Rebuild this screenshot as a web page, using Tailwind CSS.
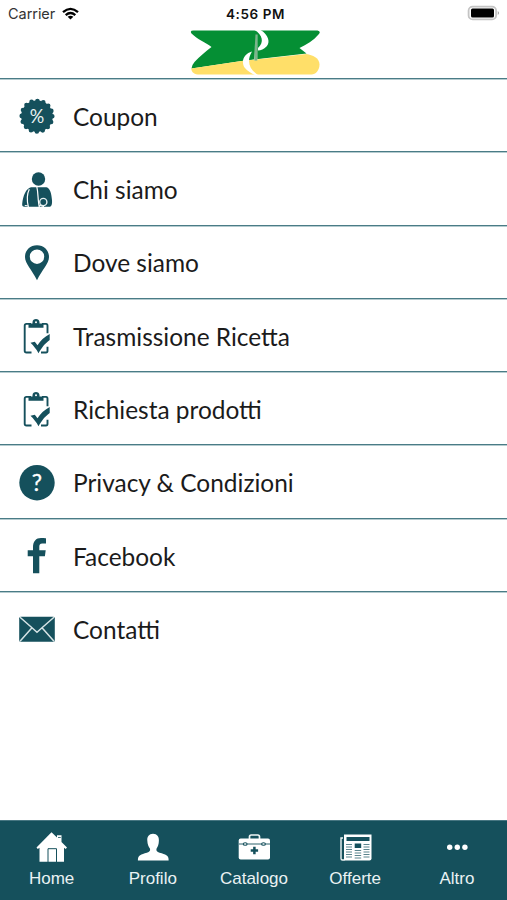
<!DOCTYPE html>
<html lang="it">
<head>
<meta charset="utf-8">
<title>Menu</title>
<script src="https://cdn.jsdelivr.net/npm/@tailwindcss/browser@4"></script>
</head>
<body class="bg-white">
<svg class="hidden">
  <symbol id="clipboard" viewBox="0 0 74 73">
    <path d="M31 24.2h-4.500q-1.800 0-1.800 1.800v25q0 1.800 1.800 1.800h5M42 24.200h4q1.500 0 1.500 1.800v7.500M47.500 47v4q0 1.800-1.500 1.800h-5" fill="none" stroke="#15505c" stroke-width="1.900"/>
    <path d="M28.500 28v-4.200h4V22.500c0-4.200 7-4.200 7 0v1.300h4V28z" fill="#15505c"/>
    <circle cx="36" cy="22.500" r="1" fill="#fff"/>
    <path d="M30.500 43l4.300-.9 2.700 3.400c3-4.500 6.500-8.300 12.200-11.300v6c-5.200 4-7.600 7-11.200 13.300-2-4-5-7.500-8-10.500z" fill="#15505c"/>
  </symbol>
</svg>
<div class="w-[507px] h-[900px] flex flex-col overflow-hidden bg-white font-['Lato','Noto_Sans',sans-serif] text-[#1b1b1b]">
  <header class="h-[79px] shrink-0 border-b border-[#4a7c86] shadow-[0_1px_0_#b5cbcf]">
    <div class="h-[28px] grid grid-cols-3 items-center pl-[8px] pr-[7px] font-['Inter','Liberation_Sans',sans-serif] text-[14px]">
      <div class="flex items-center gap-[7px] text-[#333]"><span class="text-[14.500px] tracking-[-0.050px]">Carrier</span>
        <svg class="w-[17px] h-[13px] relative -top-px" viewBox="0 0 17 13" fill="none" stroke="#000" stroke-width="2.300"><path d="M1 5.200Q8.500-1.500 16 5.200M3.700 8.100Q8.500 4 13.300 8.100"/><path d="M8.500 12.500L5.600 9.800Q8.500 7.600 11.400 9.800z" fill="#000" stroke="none"/></svg>
      </div>
      <div class="text-center text-[13.500px] font-semibold tracking-[0.600px] pl-[3px] text-[#111]">4:56 PM</div>
      <svg class="w-[34px] h-[16px] justify-self-end relative -top-px" viewBox="0 0 34 16"><rect x="2.600" y="1.600" width="27.500" height="12.800" rx="4" fill="#fff" stroke="#c4c4c4" stroke-width="1.800"/><rect x="5" y="3.600" width="23" height="9" rx="1.500" fill="#000"/><path d="M31.800 6q2 2 0 4z" fill="#888"/></svg>
    </div>
    <svg class="block mx-auto w-[132px] h-[48px]" viewBox="187.500 27.500 132 48">
      <path d="M193 30H317q4 1 1 4C313 40 306 44 299 47.500L306 53 241 60.500 191 68q0-3 3-6.500C199 56 205 51 211 46.500 205 42 197 39 191 33q-2-3 2-3z" fill="#058f34"/>
      <path d="M190.800 68L241 60.500 306 53.500c6 1 13 4 13 10.500 0 6-4 10-8 10H199c-5 0-8-2-8.200-6z" fill="#ffdf69"/>
      <path d="M255 34h2v26h-3.500z" fill="#9bcba7"/><path d="M255.500 33v27" stroke="#39824f" stroke-width=".6"/>
      <path d="M254 29.500H260C268 34 270 42 266 46Q262 50 257.500 50V47.500C264 42 262 34 254 29.500z" fill="#fff"/>
      <path d="M251.500 51C244 53 240 60 244 67q4 5 13 8.500h2C248 69 246 60 251.500 51z" fill="#fff"/>
    </svg>
  </header>

  <main class="flex-1 text-[24.450px]">
    <div class="h-[73.300px] flex items-center border-b border-[#4a7c86] shadow-[0_1px_0_#b5cbcf]">
      <svg class="w-[73px] h-[73px] shrink-0 overflow-visible" viewBox="0 -0.2 73 73"><circle cx="37" cy="37" r="15.800" fill="#15505c"/><circle cx="37" cy="37" r="15.280" fill="none" stroke="#15505c" stroke-width="4.600" stroke-linecap="round" stroke-dasharray="0 6"/><text x="37" y="43.800" text-anchor="middle" font-size="20" textLength="14.500" lengthAdjust="spacingAndGlyphs" fill="#e9f2f3">%</text></svg>
      <span class="pt-[4px]">Coupon</span>
    </div>
    <div class="h-[73.300px] flex items-center border-b border-[#4a7c86] shadow-[0_1px_0_#b5cbcf]">
      <svg class="w-[73px] h-[73px] shrink-0" viewBox="0 -0.7 73 73"><circle cx="38.500" cy="26.300" r="6.700" fill="#15505c"/><path d="M31 34.500h15.500c3.500 1 5 6 5.500 13 .3 4-.5 6.500-2.500 6.500H24.500c-2 0-2.500-1-2.300-3C23 43 26 35.500 31 34.500z" fill="#15505c"/><path d="M29.300 36.500C26.500 42 27 49 28.500 55M36.700 33.500C38.500 41 37.600 48 39.500 55" fill="none" stroke="#fff" stroke-width="1.200"/><circle cx="43.300" cy="49.300" r="3.600" fill="#15505c" stroke="#e5eff0" stroke-width="1.400"/><path d="M39 52.500l5 1.500M24.800 52.800l3 .3" stroke="#fff" stroke-width="1"/></svg>
      <span class="pt-[3px]">Chi siamo</span>
    </div>
    <div class="h-[73.300px] flex items-center border-b border-[#4a7c86] shadow-[0_1px_0_#b5cbcf]">
      <svg class="w-[73px] h-[73px] shrink-0" viewBox="0 -0.7 73 73"><path fill="#15505c" fill-rule="evenodd" d="M37 19.500c-7 0-12 5-12 11.700C25 38 32 44 37 54.500 42 44 49 38 49 31.200 49 24.500 44 19.500 37 19.500zM37 23.800a7.200 7.200 0 1 1 0 14.400 7.200 7.200 0 1 1 0-14.400z"/></svg>
      <span class="pt-[4px]">Dove siamo</span>
    </div>
    <div class="h-[73.300px] flex items-center border-b border-[#4a7c86] shadow-[0_1px_0_#b5cbcf]">
      <svg class="w-[73px] h-[73px] shrink-0" viewBox="0 -0.7 73 73"><use href="#clipboard" width="74" height="73"/></svg>
      <span class="pt-[4px]">Trasmissione Ricetta</span>
    </div>
    <div class="h-[73.300px] flex items-center border-b border-[#4a7c86] shadow-[0_1px_0_#b5cbcf]">
      <svg class="w-[73px] h-[73px] shrink-0" viewBox="0 -0.7 73 73"><use href="#clipboard" width="74" height="73"/></svg>
      <span class="pt-[3px]">Richiesta prodotti</span>
    </div>
    <div class="h-[73.300px] flex items-center border-b border-[#4a7c86] shadow-[0_1px_0_#b5cbcf]">
      <svg class="w-[73px] h-[73px] shrink-0" viewBox="0 -0.7 73 73"><circle cx="37" cy="37" r="17.700" fill="#15505c"/><text x="37" y="45" text-anchor="middle" font-size="23" fill="#fff" stroke="#fff" stroke-width=".3">?</text></svg>
      <span class="pt-[3px]">Privacy &amp; Condizioni</span>
    </div>
    <div class="h-[73.300px] flex items-center border-b border-[#4a7c86] shadow-[0_1px_0_#b5cbcf]">
      <svg class="w-[73px] h-[73px] shrink-0" viewBox="0 -0.7 73 73"><path fill="#15505c" d="M33 54.500V37.500h-5.300V31.500H33V28.500c0-6 3-9.300 8-9.300 2 0 4 .1 5 .4v5.200h-3.700c-2.500 0-3 1.400-3 3.200v3.500h6.400l-.8 6h-5.600v17z"/></svg>
      <span class="pt-[4px]">Facebook</span>
    </div>
    <div class="h-[73.300px] flex items-center">
      <svg class="w-[73px] h-[73px] shrink-0" viewBox="0 -0.2 73 73"><rect x="19.200" y="24.500" width="35.600" height="25" rx="1.500" fill="#15505c"/><path d="M20 25l12 10.500 5 4.500 5-4.500L54 25M20 49l12-13.500M54 49L42 35.500" fill="none" stroke="#d5e3e5" stroke-width="1.500"/></svg>
      <span class="pt-[3px]">Contatti</span>
    </div>
  </main>

  <nav class="h-[80px] shrink-0 bg-[#15505c] border-t border-[#477682] grid grid-cols-5 pl-px font-['Liberation_Sans',sans-serif] text-[17px] leading-[20px] text-[#eaf2f3]">
    <div class="flex flex-col items-center gap-[3px] pt-[9px]">
      <svg class="w-[40px] h-[36px]" viewBox="0.500 0.300 40 36"><path fill="#fff" d="M20 2.500l5.500 5.200V5.500h4.500v6.700l5.500 5.600-1.300 1.500-1.700-1.300v14H8V18l-1.700 1.300-1.300-1.500z"/><path fill="none" stroke="#15505c" stroke-width="1" d="M16.500 32.500V19H25v13.500"/><path d="M26.500 7.800h2.800" stroke="#15505c" stroke-width=".8"/></svg>
      <span>Home</span>
    </div>
    <div class="flex flex-col items-center gap-[3px] pt-[9px]">
      <svg class="w-[40px] h-[36px]" viewBox="0.500 0.500 40 36"><path fill="#fff" d="M20.500 4.300c-4 0-6 3-5.700 6.700.2 4 1.200 6 2.600 8 .8 2-.3 3.500-3 4.300-6 1.700-9 2.500-9 7v.7h30.700v-.7c0-4.500-3-5.300-9-7-2.700-.8-3.800-2.300-3-4.300 1.300-2 2.200-4 2.300-8 .2-3.700-1.800-6.700-5.900-6.700z"/></svg>
      <span>Profilo</span>
    </div>
    <div class="flex flex-col items-center gap-[3px] pt-[9px]">
      <svg class="w-[40px] h-[36px]" viewBox="0 0.500 40 36"><path d="M15.500 9.500V7.200q0-1.700 1.700-1.700h6.600q1.700 0 1.700 1.700v2.300" fill="none" stroke="#eef5f5" stroke-width="1.700"/><rect x="4.700" y="9" width="31.300" height="21" rx="2" fill="#fff"/><path d="M5 14.500h31" stroke="#15505c" stroke-width=".9"/><ellipse cx="11.200" cy="14.500" rx="1.900" ry="1.300" fill="#fff" stroke="#15505c" stroke-width="1.100"/><ellipse cx="29.500" cy="14.500" rx="1.900" ry="1.300" fill="#fff" stroke="#15505c" stroke-width="1.100"/><path d="M20.400 17.300v7.400M16.700 21h7.400" stroke="#15505c" stroke-width="2.500"/></svg>
      <span>Catalogo</span>
    </div>
    <div class="flex flex-col items-center gap-[3px] pt-[9px]">
      <svg class="w-[40px] h-[36px]" viewBox="0 0 40 36"><path d="M8 8H6v20.500q0 1.500 1.500 1.500h2" fill="none" stroke="#eef5f5" stroke-width="1.400"/><path d="M9 4.500h27.500v24q0 2-2 2H9z" fill="#fff"/><path d="M11.500 7h23v4h-23zM19.700 13.500h6.500V18h-6.500z" fill="#15505c"/><path d="M11 14.500h6M11 17h6M11 19.500h6M11 22h6M11 24.500h6M11 27h6M19.700 20.500h6.500M19.700 23h6.500M19.700 25.500h6.500M19.700 28h6.500M28.500 14.500h6M28.500 17h6M28.500 19.500h6M28.500 22h6M28.500 24.500h6M28.500 27h6" stroke="#5b858e" stroke-width="1"/></svg>
      <span>Offerte</span>
    </div>
    <div class="flex flex-col items-center gap-[3px] pt-[9px] pl-px">
      <svg class="w-[40px] h-[36px]" viewBox="0 0 40 36" fill="#fff"><circle cx="12.700" cy="17.200" r="2.700"/><circle cx="20.300" cy="17.200" r="2.700"/><circle cx="27.900" cy="17.200" r="2.700"/></svg>
      <span>Altro</span>
    </div>
  </nav>
</div>
</body>
</html>
